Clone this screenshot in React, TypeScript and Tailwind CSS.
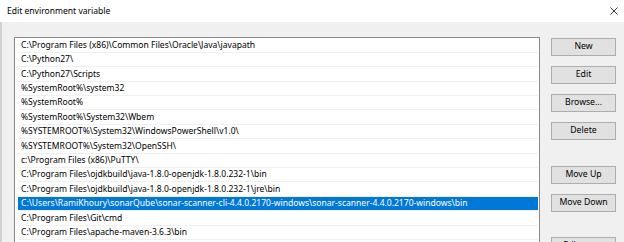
import React from "react";

const rows = [
  "C:\\Program Files (x86)\\Common Files\\Oracle\\Java\\javapath",
  "C:\\Python27\\",
  "C:\\Python27\\Scripts",
  "%SystemRoot%\\system32",
  "%SystemRoot%",
  "%SystemRoot%\\System32\\Wbem",
  "%SYSTEMROOT%\\System32\\WindowsPowerShell\\v1.0\\",
  "%SYSTEMROOT%\\System32\\OpenSSH\\",
  "c:\\Program Files (x86)\\PuTTY\\",
  "C:\\Program Files\\ojdkbuild\\java-1.8.0-openjdk-1.8.0.232-1\\bin",
  "C:\\Program Files\\ojdkbuild\\java-1.8.0-openjdk-1.8.0.232-1\\jre\\bin",
  "C:\\Users\\RamiKhoury\\sonarQube\\sonar-scanner-cli-4.4.0.2170-windows\\sonar-scanner-4.4.0.2170-windows\\bin",
  "C:\\Program Files\\Git\\cmd",
  "C:\\Program Files\\apache-maven-3.6.3\\bin",
  "",
];

function Btn({ label, className = "" }: { label: string; className?: string }) {
  return (
    <div
      className={`h-[18px] w-[65px] shrink-0 border border-[#adadad] bg-[#e1e1e1] flex items-center justify-center text-[8.7px] text-black whitespace-nowrap ${className}`}
    >
      {label}
    </div>
  );
}

export default function App() {
  return (
    <div
      className="w-[624px] h-[242px] overflow-hidden bg-[#f0f0f0] flex flex-col"
      style={{ fontFamily: '"Noto Sans", "Segoe UI", sans-serif' }}
    >
      <div className="h-[22px] shrink-0 bg-white flex items-center justify-between pl-[7px] pr-[5px]">
        <span className="text-[8.55px] text-black leading-none">Edit environment variable</span>
        <svg width="8" height="8" viewBox="0 0 8 8" className="mr-[1px]">
          <path d="M0.5 0.5 L7.5 7.5 M7.5 0.5 L0.5 7.5" stroke="#222" strokeWidth="0.9" fill="none" />
        </svg>
      </div>
      <div className="flex-1 flex border-l-2 border-[#d2d2d2] pl-[12px] pt-[15px]">
        <div className="w-[526px] h-[260px] shrink-0 border border-[#8a8a8a] bg-white pl-[3px] pr-[1px] pt-[0.5px] overflow-hidden">
          {rows.map((r, i) => (
            <div
              key={i}
              className={`h-[14.4px] flex items-center pl-[3px] border-b border-[#f0f0f0] whitespace-nowrap overflow-hidden text-[8.55px] leading-none ${
                i === 11 ? "bg-[#0078d7] text-white border-[#0078d7]" : "text-black"
              }`}
            >
              {r}
            </div>
          ))}
        </div>
        <div className="ml-[11px] flex flex-col pt-[0.5px]">
          <Btn label="New" />
          <Btn label="Edit" className="mt-[10px]" />
          <Btn label="Browse..." className="mt-[10px]" />
          <Btn label="Delete" className="mt-[10px]" />
          <Btn label="Move Up" className="mt-[26px]" />
          <Btn label="Move Down" className="mt-[10px]" />
          <Btn label="Edit text..." className="mt-[25px]" />
        </div>
      </div>
    </div>
  );
}
